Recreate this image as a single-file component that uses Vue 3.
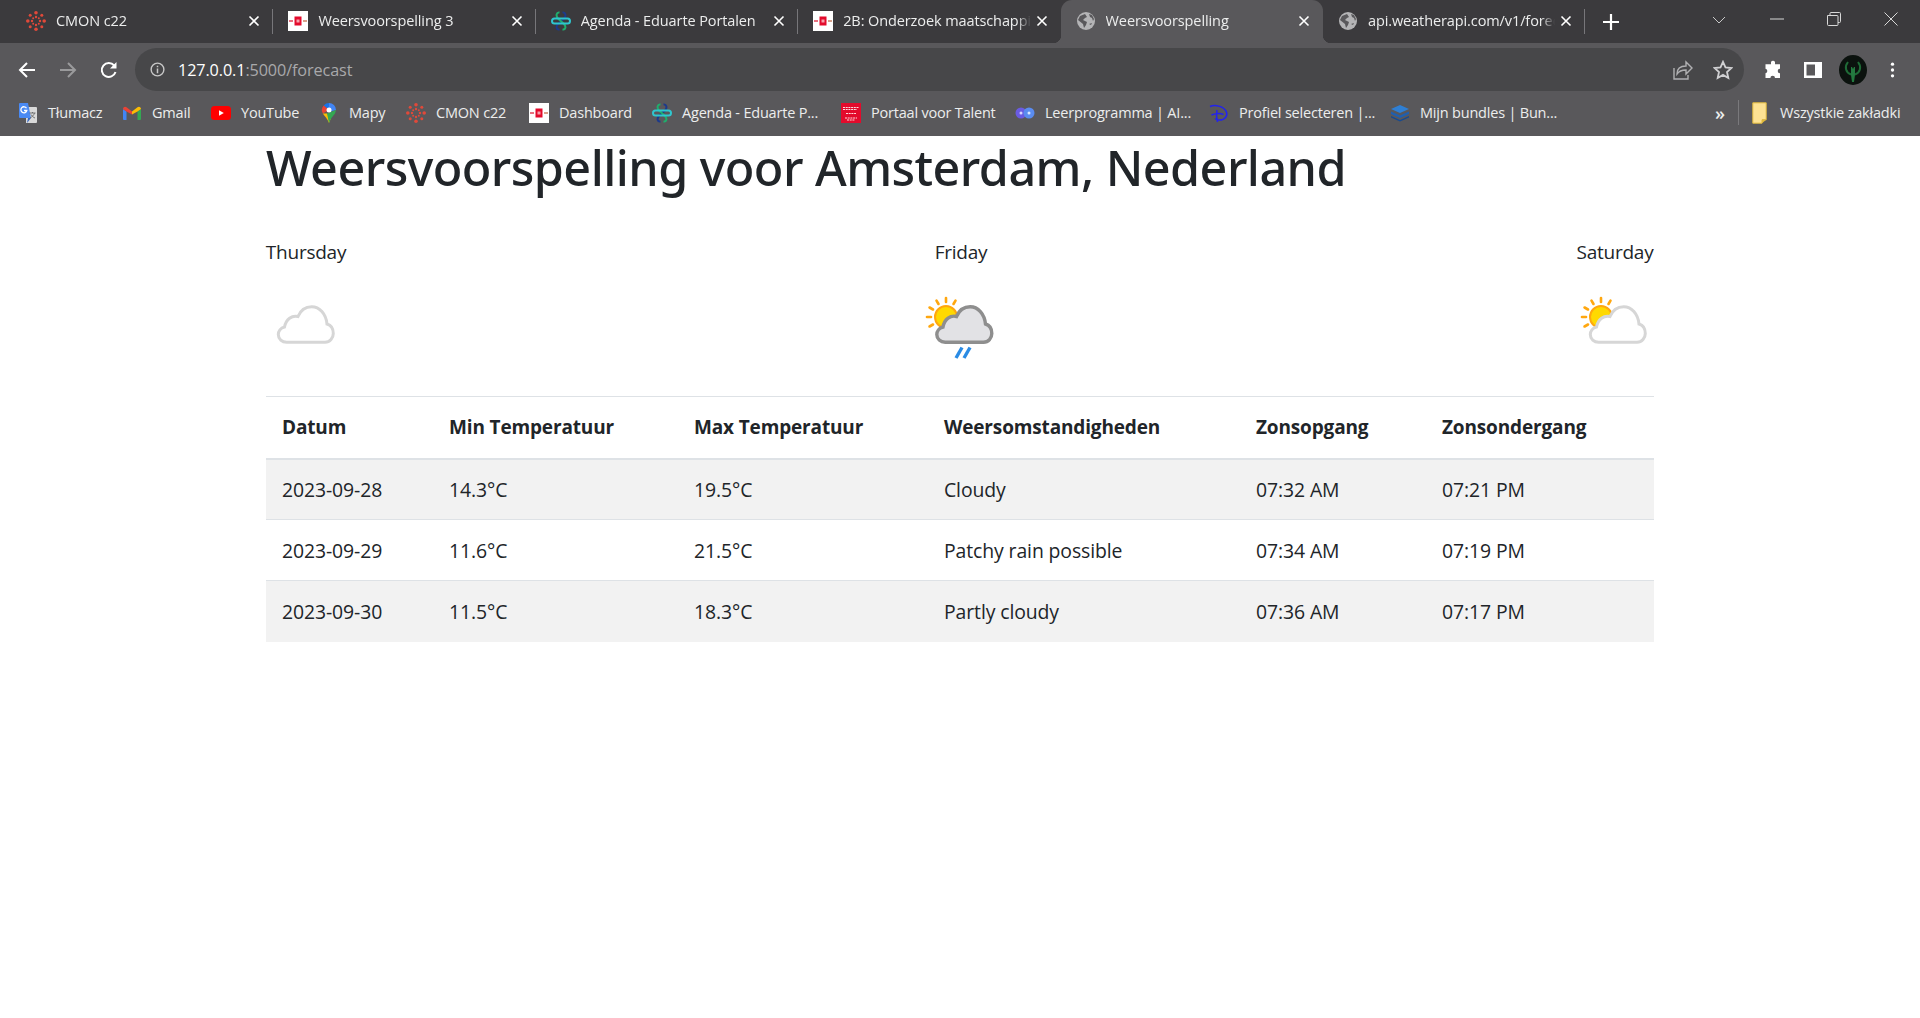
<script setup>
const tabs = [
  { icon: 'i-canvas', title: 'CMON c22', sep: true },
  { icon: 'i-flag', title: 'Weersvoorspelling 3', sep: true },
  { icon: 'i-knot', title: 'Agenda - Eduarte Portalen', sep: true },
  { icon: 'i-flag', title: '2B: Onderzoek maatschappij', sep: false },
  { icon: 'i-globe', title: 'Weersvoorspelling', sep: false, active: true },
  { icon: 'i-globe', title: 'api.weatherapi.com/v1/forecast.json', sep: true },
]
const bookmarks = [
  { icon: 'i-translate', label: 'Tłumacz', w: 104 },
  { icon: 'i-gmail', label: 'Gmail', w: 89 },
  { icon: 'i-youtube', label: 'YouTube', w: 108 },
  { icon: 'i-pin', label: 'Mapy', w: 87 },
  { icon: 'i-canvas', label: 'CMON c22', w: 123 },
  { icon: 'i-flag', label: 'Dashboard', w: 123 },
  { icon: 'i-knot', label: 'Agenda - Eduarte P...', w: 189 },
  { icon: 'i-talent', label: 'Portaal voor Talent', w: 174 },
  { icon: 'i-dots', label: 'Leerprogramma | AI...', w: 194 },
  { icon: 'i-disney', label: 'Profiel selecteren |...', w: 181 },
  { icon: 'i-stack', label: 'Mijn bundles | Bun...', w: 325 },
]
const days = [
  { name: 'Thursday', kind: 'cloud', box: '0 0 78 78' },
  { name: 'Friday', kind: 'rain', box: '2 0 78 78' },
  { name: 'Saturday', kind: 'partly', box: '1 0 78 78' },
]
const rows = [
  ['2023-09-28', '14.3°C', '19.5°C', 'Cloudy', '07:32 AM', '07:21 PM'],
  ['2023-09-29', '11.6°C', '21.5°C', 'Patchy rain possible', '07:34 AM', '07:19 PM'],
  ['2023-09-30', '11.5°C', '18.3°C', 'Partly cloudy', '07:36 AM', '07:17 PM'],
]
const heads = ['Datum', 'Min Temperatuur', 'Max Temperatuur', 'Weersomstandigheden', 'Zonsopgang', 'Zonsondergang']
const colWidths = [167, 245, 250, 312, 186, 228]
const rays = [0, 30, -30, -60, -90, -120]
const cloudPath = 'M19.7 55.3H58C63 55.3 66.3 51 66.3 46.5C66.3 41.5 63.5 38 60 37C59 27 52.5 19.7 44.7 19.7C38.5 19.7 33.5 23.5 31 29.5C25 28 19 32 17.5 40C13.5 41 11.3 44.5 11.3 47.5C11.3 52 15 55.3 19.7 55.3Z'
</script>

<template>
  <div class="page">
    <svg class="defs" width="0" height="0" aria-hidden="true">
      <symbol id="i-canvas" viewBox="0 0 20 20">
        <g fill="#e0493a">
          <circle cx="10" cy="1.800" r="1.800" /><circle cx="10" cy="18.200" r="1.800" /><circle cx="1.800" cy="10" r="1.800" /><circle cx="18.200" cy="10" r="1.800" />
          <circle cx="4.200" cy="4.200" r="1.500" /><circle cx="15.800" cy="4.200" r="1.500" /><circle cx="4.200" cy="15.800" r="1.500" /><circle cx="15.800" cy="15.800" r="1.500" />
          <circle cx="10" cy="6" r="1.200" /><circle cx="10" cy="14" r="1.200" /><circle cx="6" cy="10" r="1.200" /><circle cx="14" cy="10" r="1.200" />
          <circle cx="7.200" cy="7.200" r="1" /><circle cx="12.800" cy="7.200" r="1" /><circle cx="7.200" cy="12.800" r="1" /><circle cx="12.800" cy="12.800" r="1" />
        </g>
      </symbol>
      <symbol id="i-flag" viewBox="0 0 20 20">
        <rect width="20" height="20" fill="#fff" />
        <rect x="6.500" y="5.500" width="7" height="9" fill="#e30b2c" />
        <rect x="8.500" y="8.500" width="3" height="3" fill="#f7a1ac" />
        <rect x="1" y="9" width="4" height="2" fill="#e8707f" />
        <rect x="15" y="9" width="4" height="2" fill="#d9a08a" />
      </symbol>
      <symbol id="i-knot" viewBox="0 0 20 20">
        <g fill="none" stroke-width="2">
          <path d="M11.500 1.500C14.500 1 15.500 4.500 13 7.500L7 13c-2.500 3-1.500 6 1.500 5.500" stroke="#1c3a8c" />
          <path d="M8.500 1.500C5.500 1 4.500 4.500 7 7.500L13 13c2.500 3 1.500 6-1.500 5.500" stroke="#1fae6d" />
          <rect x="1" y="7.500" width="18" height="5" rx="2.500" stroke="#2fc6cf" />
        </g>
      </symbol>
      <symbol id="i-globe" viewBox="0 0 20 20">
        <circle cx="10" cy="10" r="9" fill="#b4b4b6" />
        <path d="M9 3 4 5l-2 4 5 4 1 4 2-3 1-3-4-2 2-2 2-1zM13 3l1 3 2 1 1 3 1-2-2-4zM13 13l2 1 1-2z" fill="#59585b" />
      </symbol>
      <symbol id="i-translate" viewBox="0 0 20 20">
        <path d="M8 4h10a1 1 0 0 1 1 1v14a1 1 0 0 1-1 1H8z" fill="#d9d9d9" />
        <path d="M2 0h8l3 15H2a1 1 0 0 1-1-1V1a1 1 0 0 1 1-1z" fill="#4a8af4" />
        <path d="M10 15l-1 5 4-5z" fill="#3367c7" />
        <path d="M11.500 10h6M14.500 9v1M16.500 10c-.5 2-2.500 4-4.500 5M13 11.500c.8 1.500 2.500 3 4 3.500" stroke="#666" fill="none" stroke-width=".9" />
        <path d="M8.500 5.300A3 3 0 1 0 8.800 7.500H6" fill="none" stroke="#fff" stroke-width="1.300" />
      </symbol>
      <symbol id="i-gmail" viewBox="0 0 20 20">
        <path d="M1 6v10a1 1 0 0 0 1 1h2.500V8.500z" fill="#4285f4" />
        <path d="M19 6v10a1 1 0 0 1-1 1h-2.500V8.500z" fill="#34a853" />
        <path d="M1 6c0-2 2-3 3.500-1.800L10 8.500l1 2-1 1-5.500-3z" fill="#ea4335" />
        <path d="M15.500 8.500 10 11.500V8.500l5.500-4.300C17 3 19 4 19 6z" fill="#fbbc04" />
      </symbol>
      <symbol id="i-youtube" viewBox="0 0 20 20">
        <rect y="3" width="20" height="14" rx="3.500" fill="#f00" />
        <path d="M8 7.300v5.400l4.800-2.700z" fill="#fff" />
      </symbol>
      <symbol id="i-pin" viewBox="0 0 20 20">
        <path d="M10 0a7 7 0 0 1 7 7L10 9z" fill="#4285f4" />
        <path d="M10 0a7 7 0 0 0-5.300 2.400L10 7z" fill="#1a73e8" />
        <path d="M4.700 2.400A7 7 0 0 0 3.800 10.500L10 7z" fill="#ea4335" />
        <path d="M3.800 10.500C5.500 13 8.500 15.500 10 20l2-5-4-4.500z" fill="#fbbc04" />
        <path d="M10 20c1.500-4.500 4-7 6-9.500L17 7l-9 3.500z" fill="#34a853" />
        <circle cx="10" cy="7" r="2.500" fill="#fff" />
      </symbol>
      <symbol id="i-talent" viewBox="0 0 20 20">
        <rect width="20" height="20" fill="#e30b2c" />
        <path d="M2 4.500h16M2 6.500h14M5 10.500h10M4 15h12M6 17h8" stroke="#ffd9dd" stroke-width="1.200" stroke-dasharray="2 .7" />
      </symbol>
      <symbol id="i-dots" viewBox="0 0 20 20">
        <circle cx="6" cy="10" r="5.500" fill="#6a5be2" />
        <circle cx="14" cy="10" r="5.500" fill="#5a8cf0" />
        <circle cx="6" cy="10" r="1.500" fill="#d8d6ff" />
        <circle cx="14" cy="10" r="1.500" fill="#d8e6ff" />
      </symbol>
      <symbol id="i-disney" viewBox="0 0 20 20">
        <path d="M1 3.500C6 1.500 14 3 17 8c2.500 4.500-1 9-6.500 9-2 0-3.500-.5-4.500-1.500M8 7c-.8 4-.5 8 .5 12M2.500 12c3-1.500 8.500-2 12-.5" fill="none" stroke="#2222f0" stroke-width="1.500" />
      </symbol>
      <symbol id="i-stack" viewBox="0 0 20 20">
        <path d="M10 2 19 6l-9 4-9-4z" fill="#2f7fd4" />
        <path d="M1 8.500l9 4 9-4v2.500l-9 4-9-4z" fill="#1f5fb0" />
        <path d="M1 13l9 4 9-4v1.500l-9 4-9-4z" fill="#174a90" />
      </symbol>
      <symbol id="i-folder" viewBox="0 0 16 22">
        <path d="M.8.8h13.400v17H10v3.400H.8z" fill="#fde293" stroke="#e0b93c" stroke-width="1" />
        <path d="M10 17.800h4.200L10 21.200z" fill="#e0b93c" />
      </symbol>
    </svg>

    <header class="browser">
      <div class="strip">
        <div v-for="tab in tabs" :key="tab.title" class="tab" :class="{ active: tab.active, sep: tab.sep }">
          <svg class="fav"><use :href="'#' + tab.icon" /></svg>
          <span class="tab-title">{{ tab.title }}</span>
          <svg class="tab-close" viewBox="0 0 12 12"><path d="M1.500 1.500l9 9M10.500 1.500l-9 9" stroke="#fff" stroke-width="1.600" /></svg>
        </div>
        <svg class="new-tab" viewBox="0 0 16 16"><path d="M8 0v16M0 8h16" stroke="#fff" stroke-width="2.200" /></svg>
        <div class="win">
          <svg viewBox="0 0 14 8" class="chev"><path d="M1 1l6 6 6-6" fill="none" stroke="#c8c8c8" /></svg>
          <svg viewBox="0 0 14 14" class="wbtn"><path d="M0 7h14" stroke="#d8d8d8" /></svg>
          <svg viewBox="0 0 14 14" class="wbtn"><path d="M.5 3.500h9.500a1 1 0 0 1 1 1v8a1 1 0 0 1-1 1H1.500a1 1 0 0 1-1-1zM3 3.500V1.500a1 1 0 0 1 1-1h8.500a1 1 0 0 1 1 1v8a1 1 0 0 1-1 1H11" fill="none" stroke="#d8d8d8" /></svg>
          <svg viewBox="0 0 14 14" class="wbtn"><path d="M.5.5l13 13M13.500.5l-13 13" stroke="#d8d8d8" /></svg>
        </div>
      </div>

      <div class="toolbar">
        <div class="nav">
          <svg viewBox="0 0 18 18"><path d="M17 9H2M9 2 2 9l7 7" fill="none" stroke="#fff" stroke-width="2" /></svg>
          <svg viewBox="0 0 18 18"><path d="M1 9h15M9 2l7 7-7 7" fill="none" stroke="#9a9a9c" stroke-width="2" /></svg>
          <svg viewBox="0 0 18 18"><path d="M15.500 11a7 7 0 1 1-1.300-6.500" fill="none" stroke="#fff" stroke-width="2" /><path d="M16.500 1v6.500H10z" fill="#fff" /></svg>
        </div>
        <div class="omnibox">
          <svg class="info" viewBox="0 0 16 16"><circle cx="8" cy="8" r="6.800" fill="none" stroke="#c8c8c8" stroke-width="1.500" /><path d="M8 7v5M8 4v1.600" stroke="#c8c8c8" stroke-width="1.600" /></svg>
          <span class="url"><b>127.0.0.1</b>:5000/forecast</span>
          <svg class="omni-i share" viewBox="0 0 20 20"><path d="M1 8v11h14v-4M4 14c0-5 3-8 9-8V2l6 6-6 6v-4c-4 0-7 1-9 4z" fill="none" stroke="#b0b0b2" stroke-width="1.400" /></svg>
          <svg class="omni-i star" viewBox="0 0 20 20"><path d="M10 1.800l2.500 5.600 6 .6-4.500 4 1.300 6-5.300-3.100-5.300 3.100 1.300-6-4.500-4 6-.6z" fill="none" stroke="#d0d0d2" stroke-width="1.800" /></svg>
        </div>
        <div class="tools">
          <svg viewBox="0 0 20 20"><path d="M8 2a2.200 2.200 0 0 1 4 0v2.200h5v4.500a2.300 2.300 0 0 0 0 4.600V18h-5a2.300 2.300 0 0 0-4.600 0H2.500v-4.800a2.300 2.300 0 0 0 0-4.500V4.200H8z" fill="#fff" /></svg>
          <svg viewBox="0 0 20 20"><path fill-rule="evenodd" d="M1 2h18v16H1zM3.500 4.500v11H12v-11z" fill="#fff" /></svg>
          <svg class="avatar" viewBox="0 0 28 30">
            <ellipse cx="14" cy="15" rx="14" ry="15" fill="#0b120e" />
            <path d="M9 7C5 12 7 18 12 19.500M19 7c4 5 2 11-3 12.500" fill="none" stroke="#1f6b37" stroke-width="2" />
            <path d="M12 12h1l1 2 1-2h1v8l-1 7h-2l-1-7z" fill="#23793f" />
          </svg>
          <svg class="kebab" viewBox="0 0 6 20"><circle cx="3" cy="3" r="2" fill="#fff" /><circle cx="3" cy="10" r="2" fill="#fff" /><circle cx="3" cy="17" r="2" fill="#fff" /></svg>
        </div>
      </div>

      <div class="bookmarks">
        <div v-for="b in bookmarks" :key="b.label" class="bm" :style="{ width: b.w + 'px' }">
          <svg class="fav"><use :href="'#' + b.icon" /></svg>
          <span>{{ b.label }}</span>
        </div>
        <span class="more">»</span>
        <i class="bm-sep"></i>
        <svg class="folder"><use href="#i-folder" /></svg>
        <span class="bm-all">Wszystkie zakładki</span>
      </div>
    </header>

    <main class="content">
      <h1>Weersvoorspelling voor Amsterdam, Nederland</h1>

      <section class="days">
        <div v-for="d in days" :key="d.name" class="day">
          <p>{{ d.name }}</p>
          <svg class="wx" :viewBox="d.box">
            <g v-if="d.kind !== 'cloud'">
              <g stroke="#ffa70f" stroke-width="2.600" stroke-linecap="round">
                <line v-for="a in rays" :key="a" x1="26" y1="15" x2="26" y2="11" :transform="`rotate(${a} 26 30)`" />
              </g>
              <circle cx="26" cy="30" r="11" fill="#ffd900" stroke="#ffa70f" stroke-width="2" />
            </g>
            <path v-if="d.kind === 'cloud'" :d="cloudPath" fill="#fff" stroke="#d6d6d6" stroke-width="3" />
            <path v-if="d.kind === 'rain'" :d="cloudPath" transform="translate(5.500 0)" fill="#e2e2e5" stroke="#8e8e8e" stroke-width="3.400" />
            <path v-if="d.kind === 'partly'" :d="cloudPath" transform="translate(4 0)" fill="#fff" stroke="#d6d6d6" stroke-width="3" />
            <g v-if="d.kind === 'rain'" stroke="#2a8be4" stroke-width="3.400">
              <line x1="42" y1="60.500" x2="36" y2="71" />
              <line x1="50" y1="60.500" x2="44" y2="71" />
            </g>
          </svg>
        </div>
      </section>

      <table>
        <colgroup>
          <col v-for="(w, i) in colWidths" :key="i" :style="{ width: w + 'px' }" />
        </colgroup>
        <thead>
          <tr><th v-for="h in heads" :key="h">{{ h }}</th></tr>
        </thead>
        <tbody>
          <tr v-for="r in rows" :key="r[0]">
            <td v-for="(c, i) in r" :key="i">{{ c }}</td>
          </tr>
        </tbody>
      </table>
    </main>
  </div>
</template>

<style>
html, body { background: #fff; }
</style>

<style scoped>
.page {
  min-height: 1018px;
  background: #fff;
  font-family: "Open Sans", "Noto Sans", "Liberation Sans", sans-serif;
  color: #212529;
}
.defs { position: absolute; }

.browser { height: 136px; background: #59585b; color: #eceded; }

.strip { display: flex; align-items: stretch; height: 43px; padding-left: 11px; background: #3b3a3d; }
.tab {
  position: relative;
  box-sizing: border-box;
  flex: 0 0 262.400px;
  min-width: 0;
  display: flex;
  align-items: center;
  gap: 10px;
  padding: 0 13px 2px 15px;
  font-size: 14.500px;
}
.tab.sep::after {
  content: "";
  position: absolute;
  right: 0;
  top: 9px;
  bottom: 9px;
  width: 1px;
  background: #77767a;
}
.tab.active { background: #59585b; border-radius: 11px 11px 0 0; }
.tab.active::before,
.tab.active::after {
  content: "";
  position: absolute;
  bottom: 0;
  width: 8px;
  height: 8px;
}
.tab.active::before { left: -8px; background: radial-gradient(circle at 0 0, transparent 8px, #59585b 8.500px); }
.tab.active::after { right: -8px; background: radial-gradient(circle at 100% 0, transparent 8px, #59585b 8.500px); }
.fav { flex: none; width: 20px; height: 20px; }
.tab-title {
  flex: 1;
  min-width: 0;
  overflow: hidden;
  white-space: nowrap;
  -webkit-mask-image: linear-gradient(to left, transparent, #000 14px);
  mask-image: linear-gradient(to left, transparent, #000 14px);
  letter-spacing: -0.1px;
}
.tab-close { flex: none; width: 12px; height: 12px; margin-left: -5px; }
.new-tab { flex: none; width: 16px; height: 16px; align-self: center; margin: 0 0 0 18px; }
.win { margin-left: auto; display: flex; align-items: center; }
.chev { width: 14px; height: 8px; margin: 0 44px 0 0; position: relative; top: -2px; }
.wbtn { width: 14px; height: 14px; margin-right: 43px; position: relative; top: -3px; }
.wbtn:last-child { margin-right: 22px; }

.toolbar { display: flex; align-items: center; height: 43px; padding-top: 5px; }
.nav { flex: 0 0 135px; box-sizing: border-box; display: flex; align-items: center; gap: 23px; padding-left: 18px; }
.nav svg { width: 18px; height: 18px; }
.omnibox {
  flex: 0 0 1609px;
  height: 43px;
  box-sizing: border-box;
  display: flex;
  align-items: center;
  padding: 0 11px 0 15px;
  border-radius: 22px;
  background: #474749;
}
.info { width: 15px; height: 15px; margin-right: 13px; }
.url { flex: 1; font-size: 16.200px; color: #a9a9ab; letter-spacing: -0.1px; }
.url b { font-weight: 400; color: #fff; }
.omni-i { width: 20px; height: 20px; }
.star { margin-left: 20px; }
.tools { flex: 1; display: flex; align-items: center; padding-left: 19px; }
.tools svg { width: 20px; height: 20px; margin-right: 20px; }
.tools .avatar { width: 28px; height: 30px; margin: 0 23px 0 -4px; }
.tools .kebab { width: 5px; height: 18px; margin: 0; }

.bookmarks { display: flex; align-items: center; height: 43px; padding-left: 18px; font-size: 14.500px; letter-spacing: -0.2px; }
.bm { flex: none; display: flex; align-items: center; gap: 10px; white-space: nowrap; }
.more { width: 23px; font-size: 18px; font-weight: 600; line-height: 1; }
.bm-sep { width: 1px; height: 25px; background: #7a797c; margin-right: 13px; }
.folder { width: 16px; height: 22px; margin-right: 12px; }

.content { box-sizing: border-box; width: 1388px; margin-left: 266px; padding-top: 2px; }
h1 { margin: 0 0 41px; font-family: "Noto Sans", "Open Sans", sans-serif; font-size: 48.500px; font-weight: 500; line-height: 59px; letter-spacing: -0.55px; }
.days { display: flex; justify-content: space-between; margin-bottom: 31px; }
.day { display: flex; flex-direction: column; align-items: center; width: 80px; }
.day:nth-child(2) { width: 78px; }
.day:nth-child(3) { width: 78px; }
.day p { margin: 0 0 20px; font-size: 19px; line-height: 29px; white-space: nowrap; letter-spacing: -0.25px; }
.wx { display: block; width: 78px; height: 78px; filter: blur(.3px); }

table { width: 1388px; table-layout: fixed; border-collapse: collapse; font-size: 19.400px; letter-spacing: -0.1px; }
thead tr { border-top: 1px solid #dee2e6; border-bottom: 2px solid #dee2e6; }
th { box-sizing: border-box; height: 62px; padding: 0 16px; text-align: left; font-size: 19px; letter-spacing: -0.15px; font-weight: 700; white-space: nowrap; }
td { box-sizing: border-box; height: 61px; padding: 0 16px; white-space: nowrap; }
tbody tr { border-bottom: 1px solid #dee2e6; }
tbody tr:nth-child(odd) { background: #f2f2f2; }
tbody tr:last-child { border-bottom: 0; }
</style>
